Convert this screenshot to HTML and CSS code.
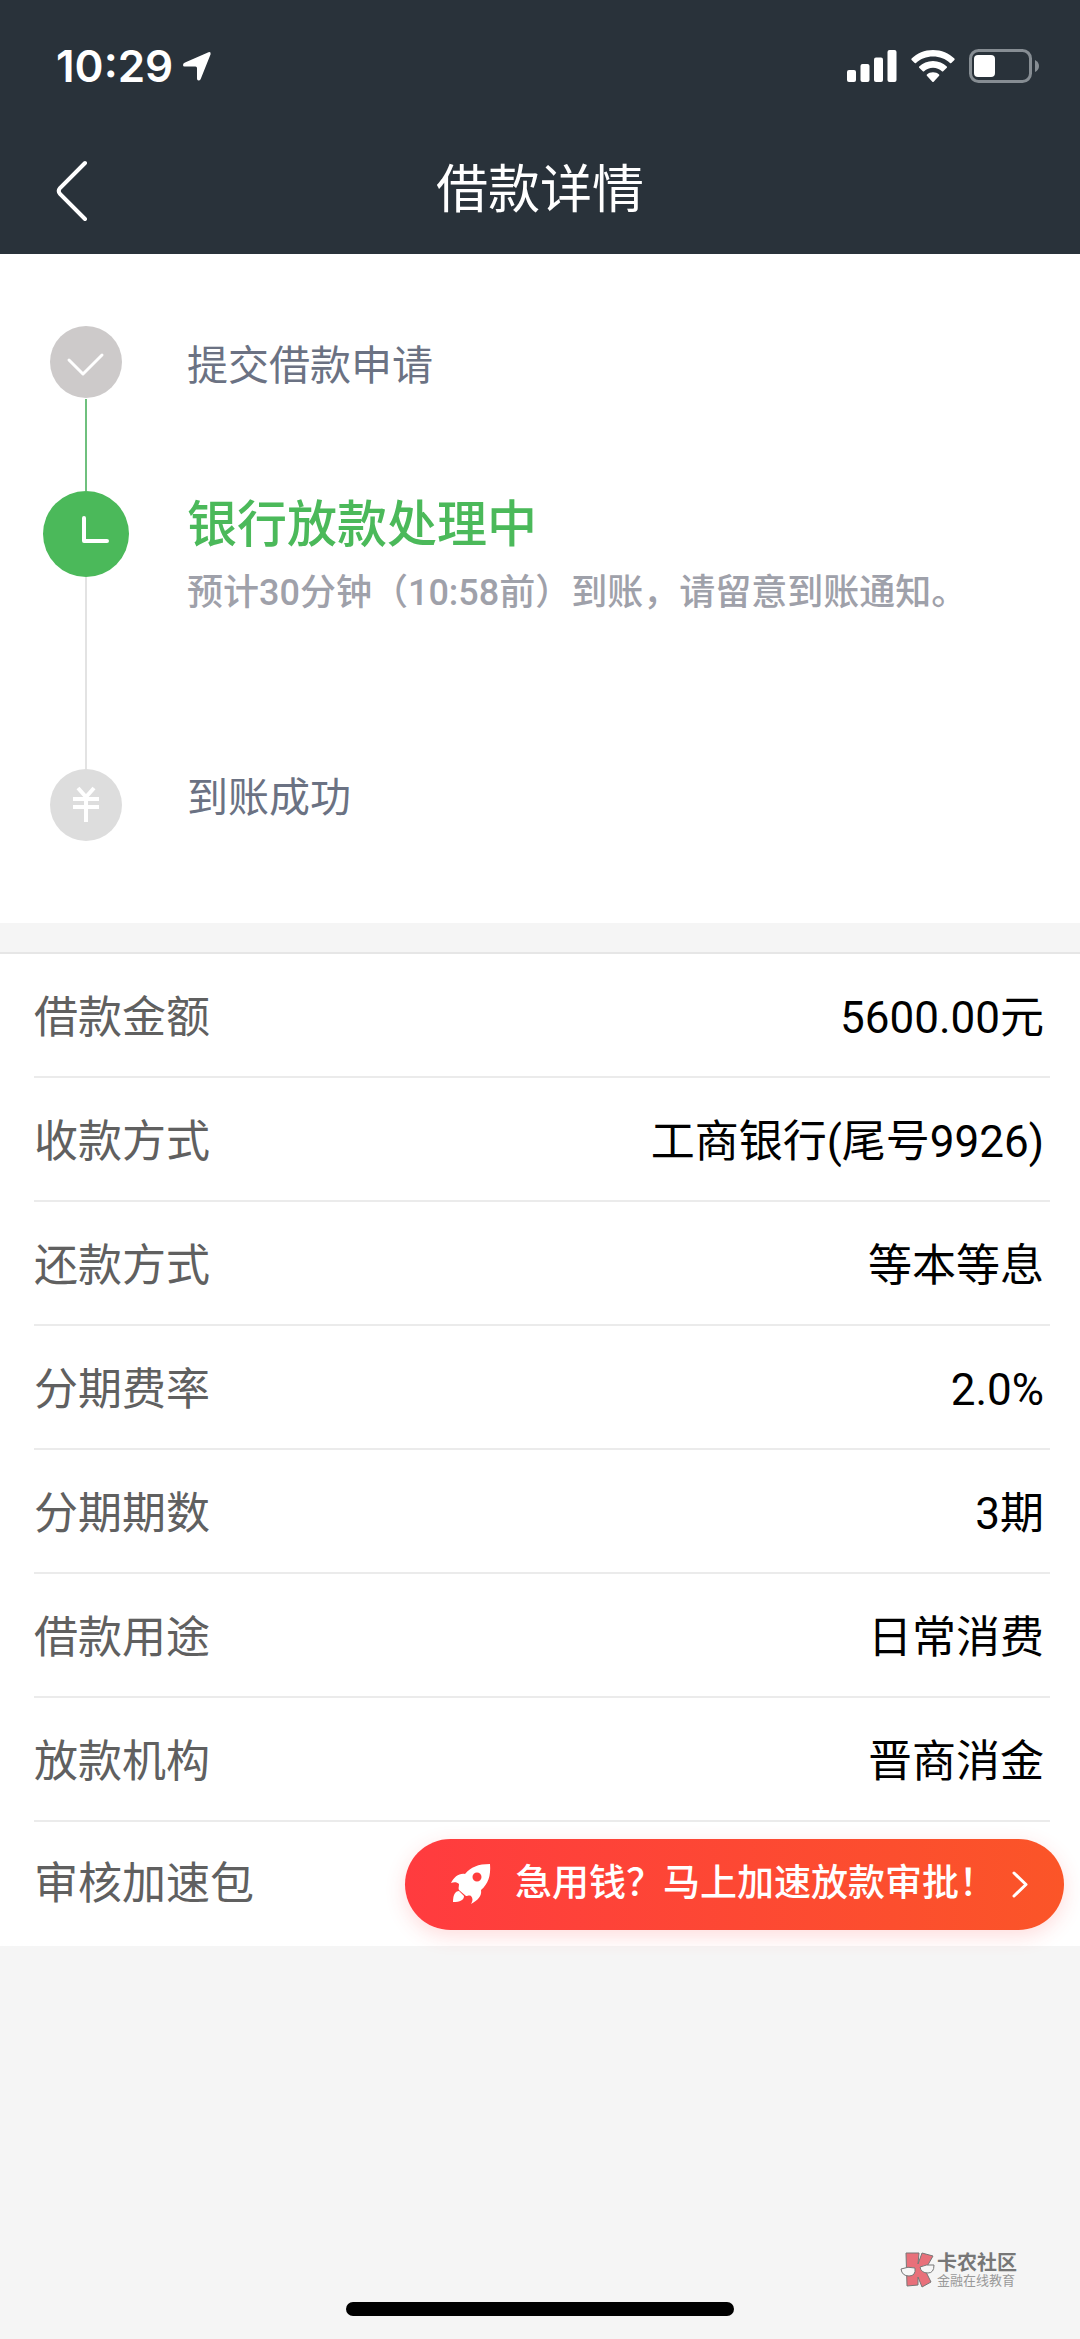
FILE: index.html
```html
<!DOCTYPE html>
<html lang="zh-CN">
<head>
<meta charset="utf-8">
<meta name="viewport" content="width=device-width, initial-scale=1">
<title>借款详情</title>
<link rel="stylesheet" href="styles.css">
</head>
<body>
<div class="page">
  <header class="header">
    <div class="status">
      <div class="status-group">
        <time class="clock">10:29</time>
        <svg class="location" viewBox="0 0 28 30" aria-hidden="true"><path d="M25.500 1.200 2 11.600Q0 12.600 0 14Q0 15.500 1.500 15.500L12.500 15.500Q14 15.500 14 17L14 27.500Q14 29.500 15.500 29.500Q17 29.500 17.600 28.200L27.600 3.300Q28 .3 25.500 1.200Z" fill="#fff"/></svg>
      </div>
      <div class="status-group status-icons">
        <svg width="50" height="32" viewBox="0 0 50 32" fill="#fff" aria-hidden="true"><rect x="0" y="20" width="9" height="12" rx="2"/><rect x="13.500" y="14" width="9" height="18" rx="2"/><rect x="27" y="7.500" width="9" height="24.500" rx="2"/><rect x="40.500" y="0" width="9" height="32" rx="2"/></svg>
        <svg width="44" height="33" viewBox="0 0 44 33" fill="#fff" aria-hidden="true"><path d="M22 0C13.500 0 6 3.300.6 8.600Q0 9.300.6 10L3.700 13Q4.400 13.600 5 13C9.500 8.800 15.400 6.500 22 6.500S34.500 8.800 39 13Q39.600 13.600 40.300 13L43.400 10Q44 9.300 43.400 8.600C38 3.300 30.500 0 22 0Z"/><path d="M22 11C16.500 11 11.700 13.100 8.200 16.400Q7.600 17.100 8.200 17.700L11.800 21.300Q12.400 21.900 13.100 21.300C15.500 19.100 18.600 17.800 22 17.800S28.500 19.100 30.900 21.300Q31.600 21.900 32.200 21.300L35.800 17.700Q36.400 17.100 35.800 16.400C32.300 13.100 27.500 11 22 11Z"/><path d="M22 22.200C19.600 22.200 17.500 23 15.900 24.400Q15.300 25 15.900 25.700L21.300 31.700Q22 32.400 22.700 31.700L28.100 25.700Q28.700 25 28.100 24.400C26.500 23 24.400 22.200 22 22.200Z"/></svg>
        <svg width="71" height="34" viewBox="0 0 71 34" aria-hidden="true"><rect x="1.500" y="1.500" width="60" height="31" rx="8" fill="none" stroke="#868d93" stroke-width="3"/><rect x="5" y="6" width="21" height="22" rx="4" fill="#fff"/><path d="M66 11Q70 13 70 17T66 23Z" fill="#868d93"/></svg>
      </div>
    </div>
    <nav class="nav">
      <button class="back" type="button" aria-label="返回"><svg width="32" height="62" viewBox="0 0 32 62" aria-hidden="true"><path d="M29 3 4 28Q1.500 31 4 34L29 59" fill="none" stroke="#fff" stroke-width="4" stroke-linecap="round"/></svg></button>
      <h1 class="title">借款详情</h1>
    </nav>
  </header>

  <main>
    <ol class="steps">
      <li class="step step-done">
        <div class="rail">
          <svg width="72" height="74" viewBox="0 0 72 74" aria-hidden="true"><circle cx="36" cy="37" r="36" fill="#cdcaca"/><path d="M19 35 33 49 52 30" fill="none" stroke="#fff" stroke-width="3" stroke-linecap="round" stroke-linejoin="round"/></svg>
          <span class="line line-green"></span>
        </div>
        <div class="step-body"><p class="step-name">提交借款申请</p></div>
      </li>
      <li class="step step-active">
        <div class="rail">
          <svg width="86" height="86" viewBox="0 0 86 86" aria-hidden="true"><circle cx="43" cy="43" r="43" fill="#4bb95a"/><path d="M41 27V50H64" fill="none" stroke="#fff" stroke-width="4" stroke-linecap="round" stroke-linejoin="round"/></svg>
          <span class="line"></span>
        </div>
        <div class="step-body">
          <p class="step-current">银行放款处理中</p>
          <p class="step-note">预计30分钟（10:58前）到账，请留意到账通知。</p>
        </div>
      </li>
      <li class="step step-last">
        <div class="rail">
          <svg width="72" height="72" viewBox="0 0 72 72" aria-hidden="true"><circle cx="36" cy="36" r="36" fill="#dddddd"/><path d="M28 19 36 28 44 19M23 30H49M23 38H49M36 29V53" fill="none" stroke="#fff" stroke-width="4"/></svg>
        </div>
        <div class="step-body"><p class="step-name">到账成功</p></div>
      </li>
    </ol>

    <dl class="details">
      <div class="row"><dt>借款金额</dt><dd>5600.00元</dd></div>
      <div class="row"><dt>收款方式</dt><dd>工商银行(尾号9926)</dd></div>
      <div class="row"><dt>还款方式</dt><dd>等本等息</dd></div>
      <div class="row"><dt>分期费率</dt><dd>2.0%</dd></div>
      <div class="row"><dt>分期期数</dt><dd>3期</dd></div>
      <div class="row"><dt>借款用途</dt><dd>日常消费</dd></div>
      <div class="row"><dt>放款机构</dt><dd>晋商消金</dd></div>
      <div class="row row-boost">
        <dt>审核加速包</dt>
        <dd>
          <button class="boost" type="button">
            <svg width="40" height="40" viewBox="0 0 40 40" aria-hidden="true"><path fill="#fff" fill-rule="evenodd" d="M39 0C27 0 20 3 14 10C8 9 3 13 0 19C3 18 6 18 8 20C8 23 7 24 8 26L15 32C17 32 18 31 20 32C22 34 22 37 20 40C27 36 31 32 30 26C37 20 40 12 39 0ZM26 8.500A4.500 4.500 0 1 1 26 17.500A4.500 4.500 0 1 1 26 8.500Z"/><path fill="#fff" d="M8 27C4 27 2 31 2 38C9 38 13 36 13 32Z"/></svg>
            <span class="boost-text">急用钱？马上加速放款审批！</span>
            <svg class="boost-arrow" width="16" height="27" viewBox="0 0 16 27" aria-hidden="true"><path d="M2 2 14 13.500 2 25" fill="none" stroke="#fff" stroke-width="3" stroke-linecap="round" stroke-linejoin="round"/></svg>
          </button>
        </dd>
      </div>
    </dl>
  </main>

  <footer class="footer">
    <div class="brand">
      <svg width="35" height="36" viewBox="0 0 35 36" aria-hidden="true"><path d="M6 1H19L18 12 22 1 33 4 25 18 31 30 22 35 18 25V33L7 34Z" fill="#e8707a" stroke="#777" stroke-width="1" stroke-linejoin="round"/><path d="M1 17Q8 14 15 16 16 24 9 24 2 24 1 17ZM20 15Q26 12 34 13 34 21 28 21 21 21 20 15Z" fill="#f7f7f7" stroke="#777" stroke-width="1"/></svg>
      <div>
        <p class="brand-name">卡农社区</p>
        <p class="brand-sub">金融在线教育</p>
      </div>
    </div>
    <div class="home-bar"></div>
  </footer>
</div>
</body>
</html>
```
FILE: styles.css
```css
* {
  box-sizing: border-box;
}

body,
h1,
p,
ol,
dl,
dd {
  margin: 0;
  padding: 0;
}

body {
  background: #f5f5f5;
  color: #000;
  font-family: Roboto, "Noto Sans CJK SC", sans-serif;
}

button {
  border: 0;
  padding: 0;
  background: none;
  color: inherit;
  font: inherit;
  cursor: pointer;
}

svg {
  display: block;
  flex: none;
}

.page {
  display: flex;
  flex-direction: column;
  min-height: 100vh;
}

/* Header */
.header {
  background: #29323a;
  color: #fff;
}

.status {
  display: flex;
  align-items: center;
  justify-content: space-between;
  height: 132px;
  padding: 0 40px 0 56px;
}

.status-group {
  display: flex;
  align-items: center;
  gap: 10px;
}

.status-icons {
  gap: 14px;
}

.clock {
  font-family: Inter, sans-serif;
  font-size: 44px;
  font-weight: 600;
  line-height: 52px;
}

.location {
  width: 28px;
  height: 30px;
}

.nav {
  display: grid;
  grid-template-columns: 120px 1fr 120px;
  align-items: center;
  height: 122px;
  padding-bottom: 4px;
}

.back {
  display: flex;
  align-items: center;
  height: 100px;
  padding-left: 56px;
}

.title {
  font-size: 52px;
  font-weight: 400;
  line-height: 76px;
  text-align: center;
}

/* Progress */
.steps {
  padding: 71px 0 82px 43px;
  background: #fff;
  list-style: none;
}

.step {
  display: flex;
  gap: 58px;
}

.rail {
  display: flex;
  flex: none;
  flex-direction: column;
  align-items: center;
  width: 86px;
}

.line {
  flex: 1;
  width: 2px;
  background: #e3e3e3;
}

.line-green {
  background: #6fc07e;
}

.step-done {
  min-height: 166px;
}

.step-active {
  min-height: 278px;
}

.step-done .step-body {
  padding-top: 12px;
}

.step-name {
  color: #6b7283;
  font-size: 41px;
  line-height: 58px;
}

.step-current {
  color: #4bb95a;
  font-size: 50px;
  font-weight: 500;
  line-height: 68px;
}

.step-note {
  color: #9fa1aa;
  font-size: 36px;
  font-weight: 500;
  line-height: 68px;
}

/* Loan details */
.details {
  margin-top: 29px;
  border-top: 2px solid #e6e6e6;
  background: #fff;
}

.row {
  display: flex;
  align-items: center;
  justify-content: space-between;
  height: 124px;
  margin: 0 30px 0 34px;
  padding: 6px 6px 0 0;
  border-bottom: 2px solid #ebebeb;
  font-size: 44px;
  line-height: 64px;
}

.row dt {
  color: #606060;
}

.row-boost {
  margin-right: 16px;
  padding: 0;
  border-bottom: 0;
}

.boost {
  display: flex;
  align-items: center;
  height: 91px;
  padding: 0 36px 0 46px;
  border-radius: 46px;
  background: linear-gradient(90deg, #ff3b3f, #fb5528);
  box-shadow: 0 6px 20px rgba(255, 60, 60, 0.18);
  color: #fff;
}

.boost-text {
  margin-left: 24px;
  font-size: 37px;
  font-weight: 500;
  line-height: 54px;
}

.boost-arrow {
  margin-left: 16px;
}

/* Footer */
.footer {
  display: flex;
  flex-direction: column;
  gap: 14px;
  margin-top: auto;
  padding-bottom: 23px;
}

.brand {
  display: flex;
  align-items: center;
  align-self: flex-end;
  gap: 2px;
  margin-right: 63px;
  color: #777;
}

.brand-name {
  font-size: 20px;
  font-weight: 700;
  line-height: 22px;
}

.brand-sub {
  color: #999;
  font-size: 13px;
  line-height: 14px;
}

.home-bar {
  align-self: center;
  width: 36%;
  height: 14px;
  border-radius: 7px;
  background: #000;
}
```
